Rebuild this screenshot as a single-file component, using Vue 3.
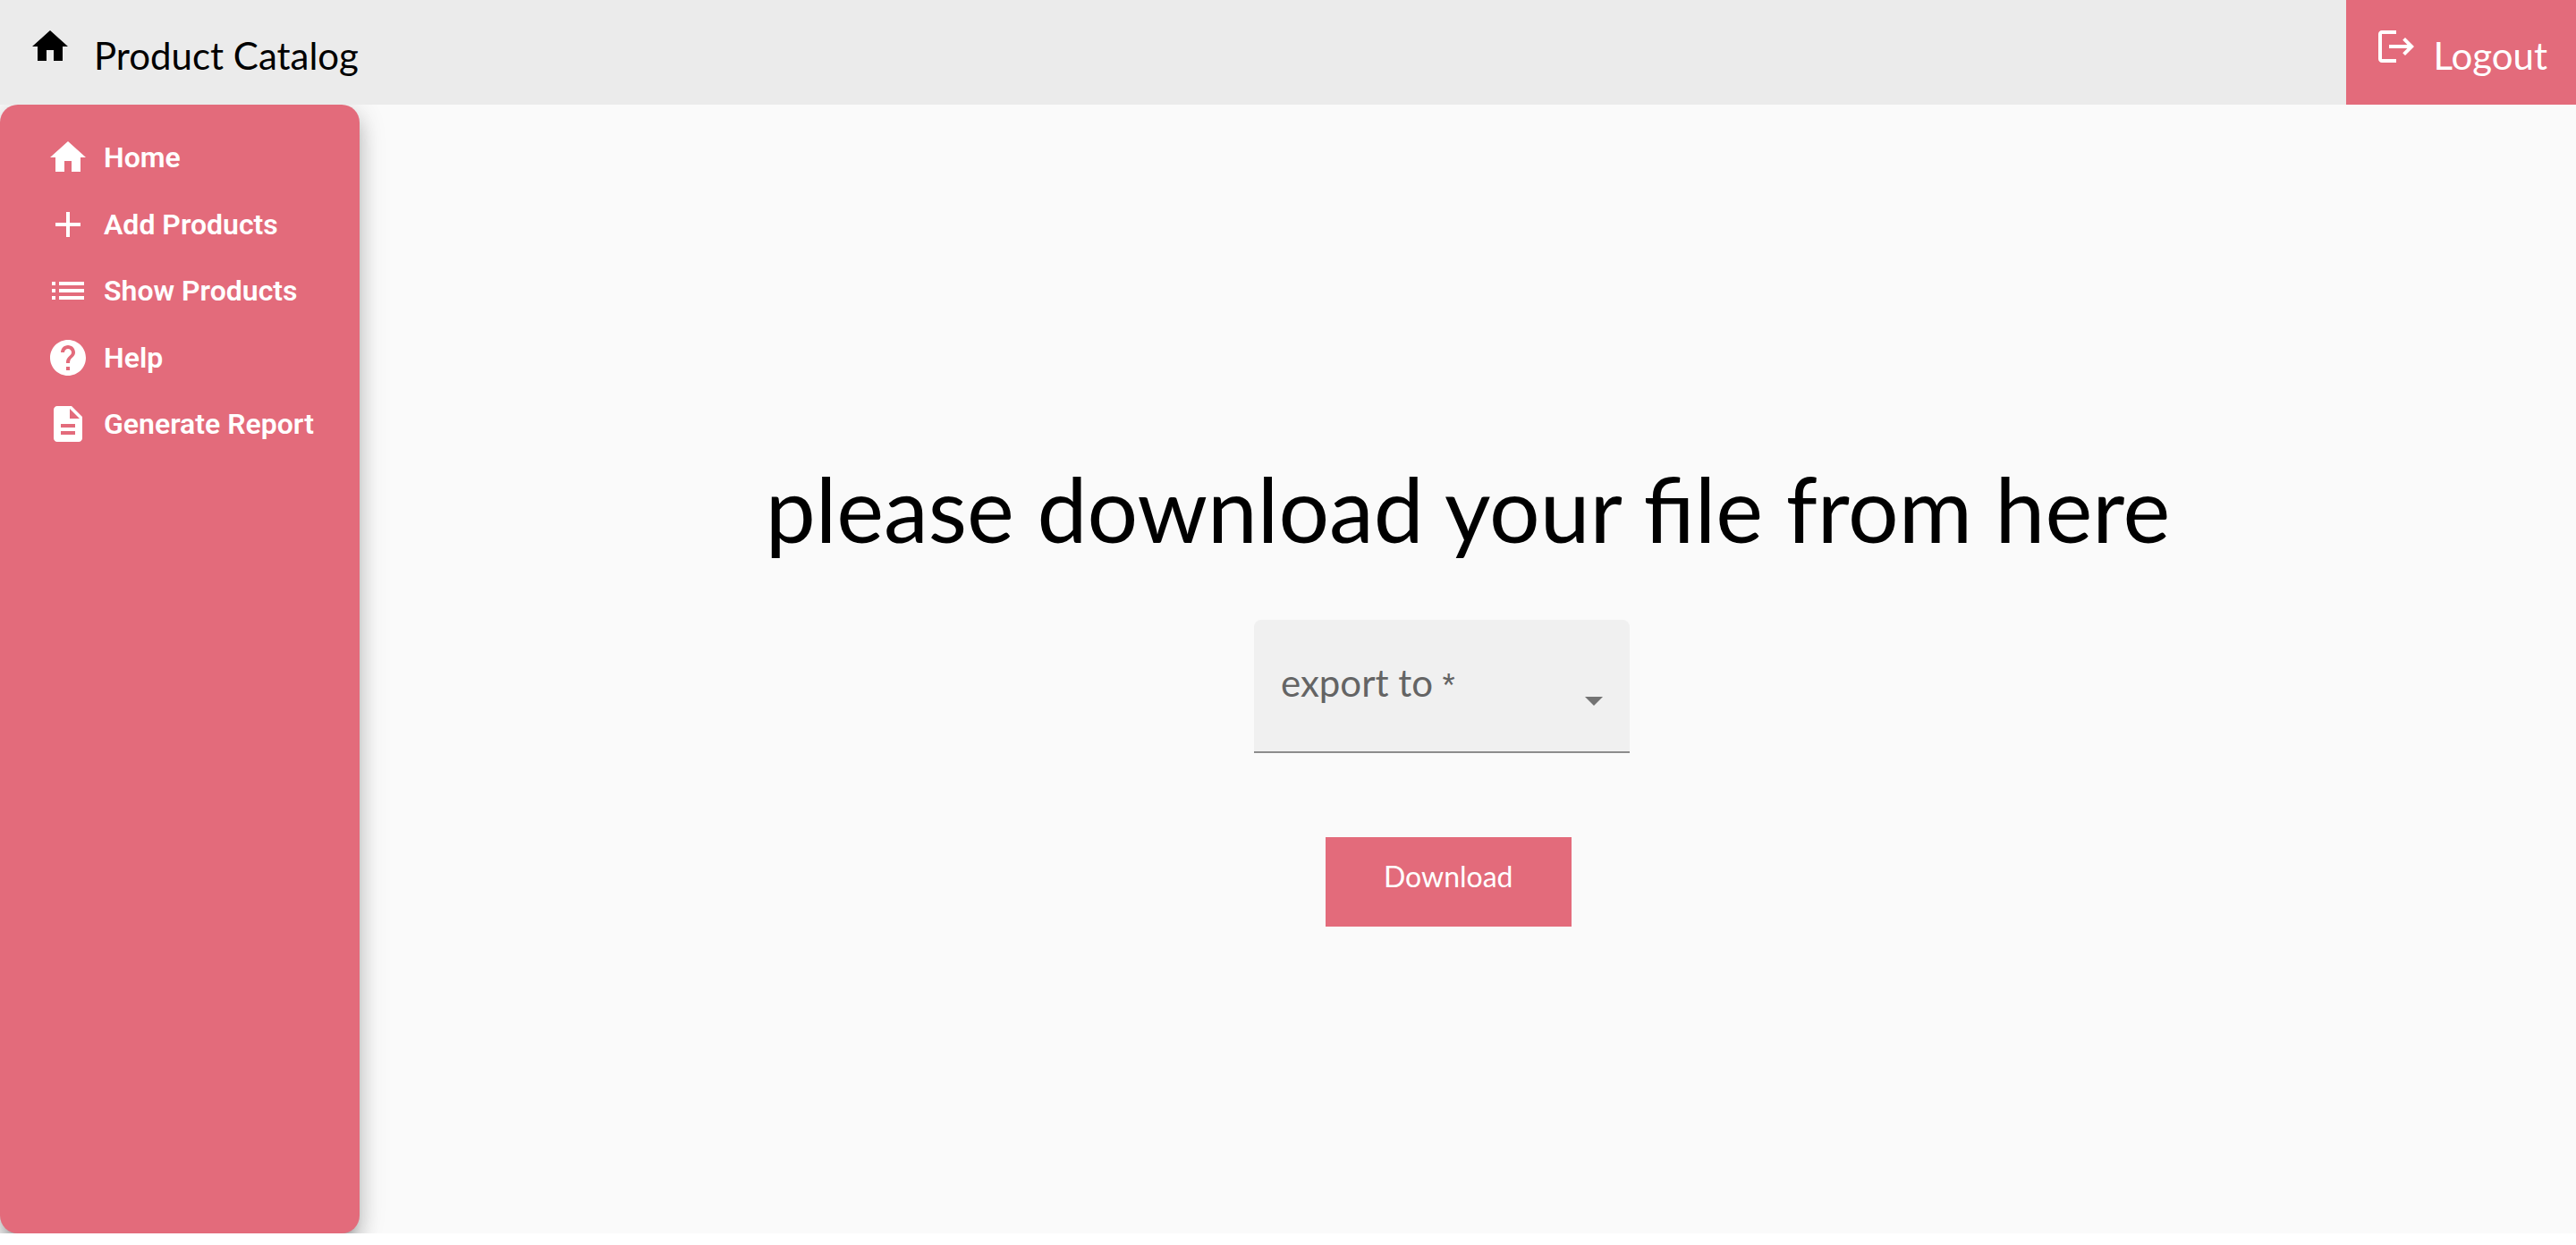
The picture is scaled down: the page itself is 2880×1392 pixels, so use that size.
<script setup>
import { ref } from 'vue'

const format = ref('')
const icons = {
  home: 'M10 20v-6h4v6h5v-8h3L12 3 2 12h3v8z',
  add: 'M19 13h-6v6h-2v-6H5v-2h6V5h2v6h6v2z',
  list: 'M3 13h2v-2H3v2zm0 4h2v-2H3v2zm0-8h2V7H3v2zm4 4h14v-2H7v2zm0 4h14v-2H7v2zM7 7v2h14V7H7z',
  help: 'M12 2C6.48 2 2 6.48 2 12s4.48 10 10 10 10-4.48 10-10S17.52 2 12 2zm1 17h-2v-2h2v2zm2.07-7.75l-.9.92C13.45 12.9 13 13.5 13 15h-2v-.5c0-1.1.45-2.1 1.17-2.83l1.24-1.26c.37-.36.59-.86.59-1.41 0-1.1-.9-2-2-2s-2 .9-2 2H8c0-2.21 1.79-4 4-4s4 1.79 4 4c0 .88-.36 1.68-.93 2.25z',
  report: 'M14 2H6c-1.1 0-1.99.9-1.99 2L4 20c0 1.1.89 2 1.99 2H18c1.1 0 2-.9 2-2V8l-6-6zm2 16H8v-2h8v2zm0-4H8v-2h8v2zm-3-5V3.500L18.500 9H13z',
  logout: 'M4 3h8v2H4v14h8v2H4c-1.100 0-2-.9-2-2V5c0-1.100.9-2 2-2zM17 7l5 5-5 5-1.400-1.400 2.600-2.600H8v-2h10.200l-2.600-2.600z',
}
const links = [
  { label: 'Home', icon: 'home' },
  { label: 'Add Products', icon: 'add' },
  { label: 'Show Products', icon: 'list' },
  { label: 'Help', icon: 'help' },
  { label: 'Generate Report', icon: 'report' },
]
</script>

<template>
  <div class="app">
    <header class="toolbar">
      <a class="brand" href="#">
        <svg class="icon" viewBox="0 0 24 24" aria-hidden="true"><path :d="icons.home" /></svg>
        <span class="toolbar-text">Product Catalog</span>
      </a>
      <button class="logout" type="button">
        <svg class="icon" viewBox="0 0 24 24" aria-hidden="true"><path :d="icons.logout" /></svg>
        <span class="toolbar-text">Logout</span>
      </button>
    </header>
    <div class="body">
      <nav class="sidebar">
        <div class="nav-list">
          <a v-for="link in links" :key="link.label" class="nav-link" href="#">
            <svg class="icon" viewBox="0 0 24 24" aria-hidden="true"><path :d="icons[link.icon]" /></svg>
            <span>{{ link.label }}</span>
          </a>
        </div>
      </nav>
      <main class="content">
        <h1 class="title">please download your file from here</h1>
        <form class="form" @submit.prevent>
          <div class="field">
            <label v-show="!format" class="field-label" for="export-format">export to <span class="required">*</span></label>
            <select id="export-format" v-model="format" class="field-select" required>
              <option value=""></option>
              <option value="pdf">PDF</option>
              <option value="excel">Excel</option>
            </select>
            <svg class="arrow" viewBox="0 0 20 10" aria-hidden="true"><path d="M0 0h20L10 10z" /></svg>
          </div>
          <button class="download" type="submit">Download</button>
        </form>
      </main>
    </div>
  </div>
</template>

<style>
body {
  margin: 0;
  background: #fff;
}
</style>

<style scoped>
.app {
  font-family: Papyrus, Lato, sans-serif;
  color: #000;
}
.toolbar {
  display: flex;
  justify-content: space-between;
  height: 117px;
  background: #ebebeb;
}
.brand,
.logout {
  display: flex;
  align-items: flex-start;
  box-sizing: border-box;
  padding: 28px 32px;
  color: #000;
  text-decoration: none;
}
.brand {
  gap: 25px;
}
.logout {
  gap: 17px;
  border: 0;
  background: #e36b7b;
  color: #fff;
  font-family: inherit;
  cursor: pointer;
}
.icon {
  flex: none;
  width: 48px;
  height: 48px;
  fill: currentColor;
}
.toolbar-text {
  padding-top: 8px;
  font-size: 42px;
  line-height: 52px;
}
.body {
  display: flex;
  min-height: calc(100vh - 130px);
  overflow: hidden;
  background: #fafafa;
}
.sidebar {
  flex: none;
  box-sizing: border-box;
  width: 402px;
  padding: 35px 52px;
  border-radius: 20px;
  background: #e36b7b;
  box-shadow: 0 10px 10px -6px rgba(0, 0, 0, 0.2), 0 16px 20px 2px rgba(0, 0, 0, 0.14), 0 6px 28px 4px rgba(0, 0, 0, 0.12);
}
.nav-list {
  display: flex;
  flex-direction: column;
  justify-content: space-between;
  min-height: 346px;
}
.nav-link {
  display: flex;
  align-items: center;
  gap: 16px;
  color: #fff;
  font-family: Roboto, sans-serif;
  font-size: 32px;
  font-weight: 600;
  text-decoration: none;
  white-space: nowrap;
}
.content {
  flex: 1;
  display: flex;
  flex-direction: column;
  align-items: center;
  padding-top: 376px;
}
.title {
  margin: 0;
  font-size: 100px;
  font-weight: 400;
  line-height: 150px;
  white-space: nowrap;
}
.form {
  display: flex;
  flex-direction: column;
  align-items: flex-start;
  margin: 50px 58px 0 0;
}
.field {
  position: relative;
  width: 420px;
}
.field-select {
  display: block;
  box-sizing: border-box;
  width: 100%;
  height: 149px;
  padding: 0 32px;
  border: 0;
  border-bottom: 2px solid #8c8c8c;
  border-radius: 8px 8px 0 0;
  background: #f0f0f0;
  color: #000;
  font-family: inherit;
  font-size: 42px;
  appearance: none;
}
.field-label {
  position: absolute;
  top: 44px;
  left: 30px;
  color: #646464;
  font-size: 42px;
  line-height: 52px;
  pointer-events: none;
}
.required {
  font-family: Roboto, sans-serif;
  font-size: 32px;
  vertical-align: 4px;
  line-height: 1;
}
.arrow {
  position: absolute;
  top: 86px;
  right: 30px;
  width: 20px;
  height: 10px;
  fill: #737373;
  pointer-events: none;
}
.download {
  margin: 94px 0 0 80px;
  padding: 20px 65px 32px;
  border: 0;
  background: #e36b7b;
  color: #fff;
  font-family: inherit;
  font-size: 32px;
  line-height: 48px;
  cursor: pointer;
}
</style>
